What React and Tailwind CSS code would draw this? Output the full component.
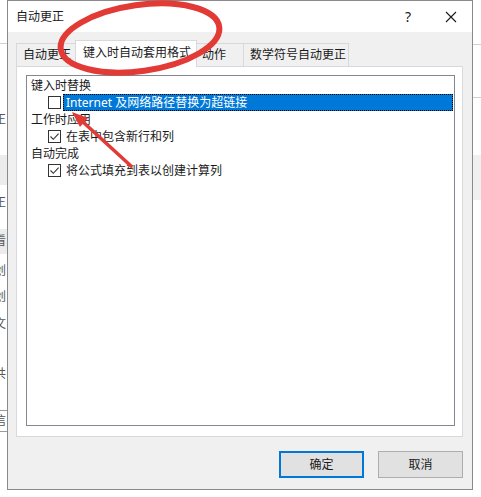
import React from 'react';

function Box({ checked }) {
  return (
    <span className="w-[13px] h-[13px] border border-[#333333] bg-white flex items-center justify-center shrink-0">
      {checked && (
        <svg width="11" height="11" viewBox="0 0 11 11">
          <path d="M1.5 5.5 L4.3 8.3 L9.6 2.6" stroke="#333333" strokeWidth="1.1" fill="none" />
        </svg>
      )}
    </span>
  );
}

function Group({ children }) {
  return <div className="h-[17px] pl-[4px] flex items-center text-[#1a1a1a]">{children}</div>;
}

function Item({ checked, selected, children }) {
  return (
    <div className="h-[17px] pl-[21px] flex items-center">
      <Box checked={checked} />
      {selected ? (
        <span className="ml-[2px] flex-1 h-[17px] bg-[#0078d7] text-white pl-[3px] flex items-center outline outline-1 outline-dotted outline-[#000000] -outline-offset-1">
          {children}
        </span>
      ) : (
        <span className="ml-[5px] text-[#1a1a1a]">{children}</span>
      )}
    </div>
  );
}

export default function App() {
  return (
    <div className="relative w-[481px] h-[497px] bg-white overflow-hidden flex text-[12px] font-['Noto_Sans','Noto_Sans_CJK_SC',sans-serif]">
      {/* Word window behind the dialog, left edge */}
      <div className="w-[7px] overflow-hidden flex flex-col text-[#555555] leading-[16px]">
        <div className="h-[43px]" />
        <div className="h-px bg-[#d0d0d0]" />
        <div className="h-[68px]" />
        <div className="h-[16px] ml-[-6px]">正</div>
        <div className="h-[27px]" />
        <div className="h-[30px] bg-[#ececec]" />
        <div className="h-[10px]" />
        <div className="h-[16px] ml-[-6px]">正</div>
        <div className="h-[18px]" />
        <div className="h-[25px] bg-[#ececec] ml-[-6px] pt-[4px]">看</div>
        <div className="h-[9px]" />
        <div className="h-[16px] ml-[-6px]">创</div>
        <div className="h-[10px]" />
        <div className="h-[16px] ml-[-6px]">创</div>
        <div className="h-[11px]" />
        <div className="h-[16px] ml-[-6px]">文</div>
        <div className="h-[34px]" />
        <div className="h-[16px] ml-[-6px]">共</div>
        <div className="h-[28px]" />
        <div className="h-[22px] border-y border-[#9a9a9a] ml-[-6px] leading-[20px]">信</div>
      </div>

      {/* dialog */}
      <div className="w-[466px] h-[490px] border border-[#8a8a8a] flex flex-col">
        <div className="h-[31px] bg-white flex items-center pl-[8px] text-[#1a1a1a]">
          <span className="flex-1">自动更正</span>
          <span className="text-[14px] mr-[34px]">?</span>
          <svg width="12" height="12" viewBox="0 0 12 12" className="mr-[15px]">
            <path d="M1 1 L11 11 M11 1 L1 11" stroke="#1a1a1a" strokeWidth="1.1" />
          </svg>
        </div>
        <div className="flex-1 bg-[#f0f0f0] px-[8px] pt-[8px] flex flex-col">
          <div className="h-[27px] flex items-end mb-[-1px] relative z-10 text-[#1a1a1a]">
            <div className="w-[60px] h-[24px] border border-[#d9d9d9] bg-[#f0f0f0] flex items-center pl-[6px]">自动更正</div>
            <div className="w-[122px] h-[27px] -ml-px border border-b-0 border-[#d9d9d9] bg-white flex items-center pl-[7px] pb-[2px]">键入时自动套用格式</div>
            <div className="w-[48px] h-[24px] -ml-px border border-[#d9d9d9] bg-[#f0f0f0] flex items-center pl-[5px]">动作</div>
            <div className="w-[106px] h-[24px] -ml-px border border-[#d9d9d9] bg-[#f0f0f0] flex items-center pl-[6px]">数学符号自动更正</div>
          </div>
          <div className="w-[447px] h-[371px] border border-[#d9d9d9] bg-white pt-[8px] pl-[9px] pr-[7px] pb-[10px] flex">
            <div className="flex-1 border border-[#828790] bg-white pt-px pr-px">
              <Group>键入时替换</Group>
              <Item selected>Internet 及网络路径替换为超链接</Item>
              <Group>工作时应用</Group>
              <Item checked>在表中包含新行和列</Item>
              <Group>自动完成</Group>
              <Item checked>将公式填充到表以创建计算列</Item>
            </div>
          </div>
          <div className="mt-[14px] flex justify-end gap-[14px] pr-[1px] text-[#1a1a1a]">
            <button className="w-[85px] h-[27px] border-2 border-[#0078d7] bg-[#e1e1e1]">确定</button>
            <button className="w-[85px] h-[27px] border border-[#adadad] bg-[#e1e1e1]">取消</button>
          </div>
        </div>
      </div>

      {/* Word window behind the dialog, right edge */}
      <div className="flex-1 flex flex-col">
        <div className="h-[44px]" />
        <div className="h-px bg-[#d0d0d0]" />
        <div className="h-[52px]" />
        <div className="h-px bg-[#d0d0d0]" />
        <div className="h-[57px]" />
        <div className="h-[45px] bg-[#f0f0f0]" />
      </div>

      {/* red annotation */}
      <svg className="absolute inset-0 pointer-events-none z-20" width="481" height="497" viewBox="0 0 481 497">
        <ellipse cx="140" cy="38" rx="80" ry="33" transform="rotate(-8 140 38)" stroke="#e23b36" strokeWidth="6" fill="none" />
        <line x1="131" y1="166" x2="83" y2="122" stroke="#e23b36" strokeWidth="3.5" strokeLinecap="round" />
        <polygon points="72,112 88,118 80,127" fill="#e23b36" />
      </svg>
    </div>
  );
}
